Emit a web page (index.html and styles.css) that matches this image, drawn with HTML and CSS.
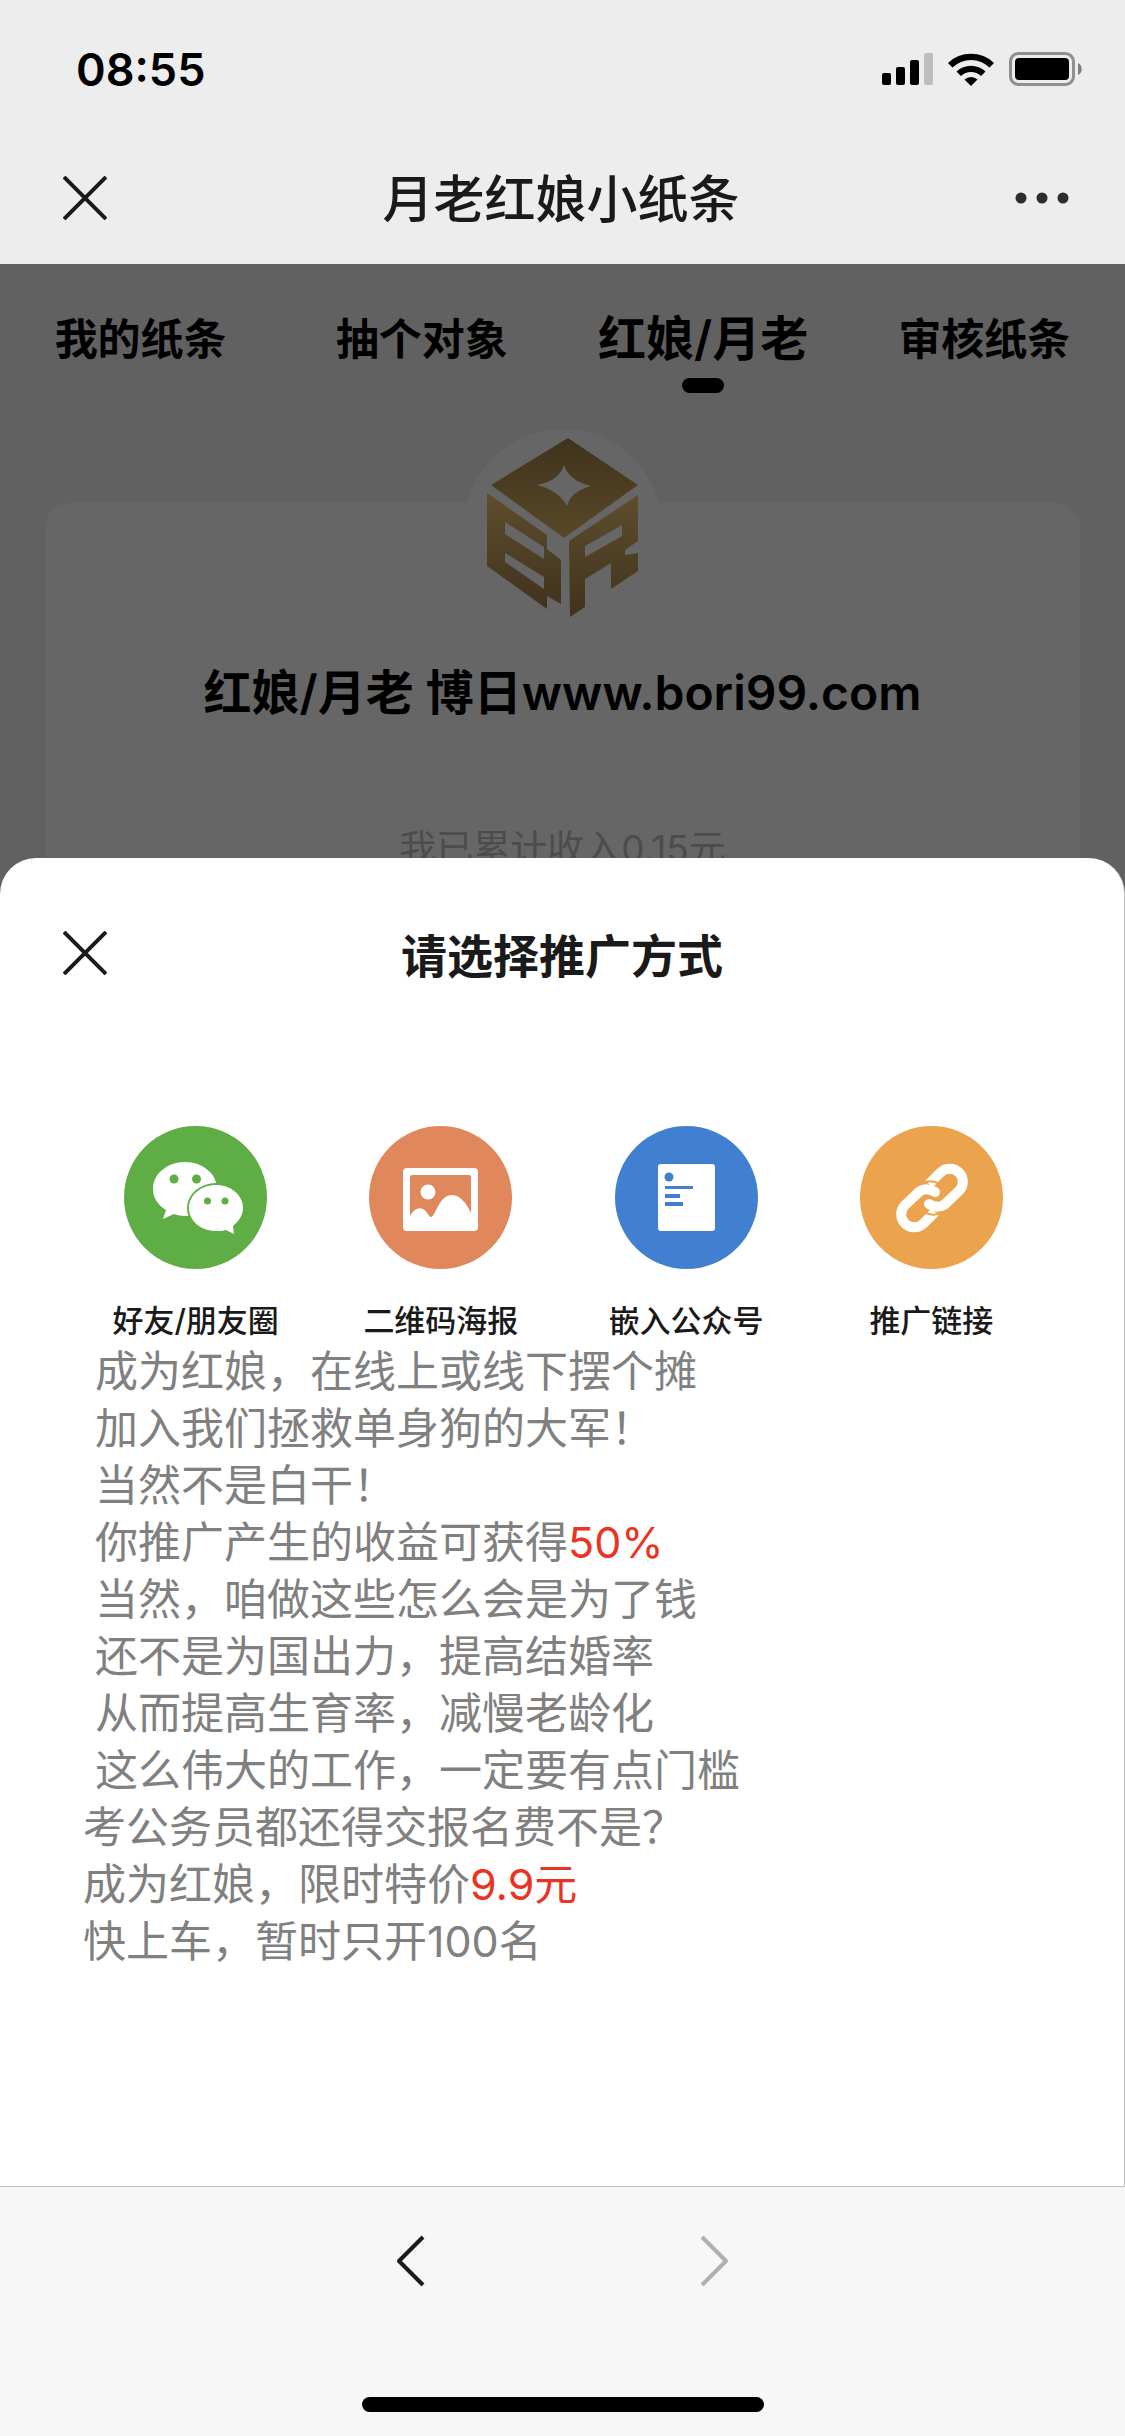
FILE: index.html
```html
<!DOCTYPE html>
<html lang="zh-CN">
<head>
  <meta charset="UTF-8">
  <meta name="viewport" content="width=device-width, initial-scale=1">
  <title>月老红娘小纸条</title>
  <link rel="stylesheet" href="styles.css">
</head>
<body>

<div class="app">
  <header class="header">
    <div class="status-bar">
      <span class="time">08:55</span>
      <div class="status-icons">
        <svg class="signal" viewBox="0 0 51 32">
          <rect x="0" y="20" width="9" height="12" rx="2"/>
          <rect x="14" y="14" width="9" height="18" rx="2"/>
          <rect x="28" y="7" width="9" height="25" rx="2"/>
          <rect x="42" y="0" width="9" height="32" rx="2" fill="#bdbdbd"/>
        </svg>
        <svg class="wifi" viewBox="0 0 46 33">
          <path d="M0 10a33 33 0 0 1 46 0l-4.500 4.500a26.500 26.500 0 0 0-37 0z"/>
          <path d="M8.500 18.500a21 21 0 0 1 29 0L33 23a14.500 14.500 0 0 0-20 0z"/>
          <path d="M16.500 26.500a9.500 9.500 0 0 1 13 0L23 33z"/>
        </svg>
        <svg class="battery" viewBox="0 0 74 34">
          <rect x="1.500" y="1.500" width="63" height="31" rx="8" fill="none" stroke="#909090" stroke-width="3"/>
          <rect x="6" y="6" width="54" height="22" rx="4"/>
          <path d="M69 11c5 2 5 10 0 12z" fill="#808080"/>
        </svg>
      </div>
    </div>
    <div class="nav-bar">
      <button class="icon-btn" type="button" aria-label="关闭">
        <svg class="close" viewBox="0 0 44 44"><path d="M1 1l42 42M43 1L1 43"/></svg>
      </button>
      <h1 class="nav-title">月老红娘小纸条</h1>
      <button class="icon-btn" type="button" aria-label="更多">
        <svg class="more" viewBox="0 0 54 12"><circle cx="6" cy="6" r="5.500"/><circle cx="27" cy="6" r="5.500"/><circle cx="48" cy="6" r="5.500"/></svg>
      </button>
    </div>
  </header>

  <main class="page">
    <nav class="tabs">
      <a class="tab" href="#notes">我的纸条</a>
      <a class="tab" href="#draw">抽个对象</a>
      <a class="tab active" href="#matchmaker">红娘/月老</a>
      <a class="tab" href="#review">审核纸条</a>
    </nav>

    <section class="card">
      <div class="avatar">
        <svg class="logo" viewBox="0 0 152 180">
          <defs>
            <linearGradient id="gold-top" x1="0" y1="0" x2="0" y2="1">
              <stop offset="0" stop-color="#40331c"/>
              <stop offset="1" stop-color="#594828"/>
            </linearGradient>
            <linearGradient id="gold-side" x1="0" y1="0" x2="0" y2="1">
              <stop offset="0" stop-color="#5e4e2e"/>
              <stop offset="1" stop-color="#40331c"/>
            </linearGradient>
          </defs>
          <path fill="url(#gold-top)" fill-rule="evenodd" d="M81 0L151 47 77 100 4 47zM77 27Q72 43 50 47 71 52 80 68 84 53 104 48 82 43 77 27z"/>
          <path fill="url(#gold-side)" fill-rule="evenodd" d="M0 55L60 97V111L74 122V166L60 158V171L0 128zM18 84V96L57 121V109zM18 115V124L57 151V139z"/>
          <path fill="url(#gold-side)" fill-rule="evenodd" d="M82 103L151 57V103L138 112V117L151 115V133L124 151V125L98 141V169L83 179zM98 108V119L135 98V87z"/>
        </svg>
      </div>
      <h2 class="name">红娘/月老 博日www.bori99.com</h2>
      <p class="income">我已累计收入0.15元</p>
    </section>
  </main>

  <section class="sheet">
    <div class="sheet-head">
      <button class="icon-btn" type="button" aria-label="关闭">
        <svg class="close" viewBox="0 0 44 44"><path d="M1 1l42 42M43 1L1 43"/></svg>
      </button>
      <h2 class="sheet-title">请选择推广方式</h2>
    </div>

    <div class="options">
      <button class="option" type="button">
        <svg class="option-icon" viewBox="0 0 143 143">
          <circle cx="71.500" cy="71.500" r="71.500" fill="#5fad45"/>
          <path fill="#fff" d="M61 36c18 0 32 12 32 27S79 90 61 90c-4 0-8-1-11-2l-11 5 3-9c-8-5-13-12-13-21 0-15 14-27 32-27z"/>
          <ellipse cx="92" cy="82" rx="29" ry="25" fill="#5fad45"/>
          <path fill="#fff" d="M92 59c15 0 27 10 27 23 0 7-4 13-10 18l1 8-8-4c-3 1-6 1-10 1-15 0-27-10-27-23s12-23 27-23z"/>
          <g fill="#5fad45"><circle cx="50" cy="53" r="4.500"/><circle cx="72.500" cy="53" r="4.500"/><circle cx="83.500" cy="75" r="3.500"/><circle cx="101" cy="75" r="3.500"/></g>
        </svg>
        <span>好友/朋友圈</span>
      </button>
      <button class="option" type="button">
        <svg class="option-icon" viewBox="0 0 143 143">
          <circle cx="71.500" cy="71.500" r="71.500" fill="#e1875c"/>
          <rect x="34" y="42" width="75" height="63" rx="4" fill="#fff"/>
          <path fill="#e1875c" d="M43 49h57q2 0 2 2v36c-4-9-11-18-19-18-10 0-14 12-18 19-2 4-4 4-6 0-4-7-12-9-18 2V51q0-2 2-2z"/>
          <circle cx="59" cy="66" r="7.500" fill="#fff"/>
        </svg>
        <span>二维码海报</span>
      </button>
      <button class="option" type="button">
        <svg class="option-icon" viewBox="0 0 143 143">
          <circle cx="71.500" cy="71.500" r="71.500" fill="#4180d1"/>
          <rect x="43" y="38" width="57" height="67" rx="3" fill="#fff"/>
          <g fill="#4180d1"><circle cx="54" cy="51" r="4.500"/><rect x="50" y="60" width="28" height="3"/><rect x="50" y="68" width="15" height="4"/><rect x="50" y="76" width="18" height="4"/></g>
        </svg>
        <span>嵌入公众号</span>
      </button>
      <button class="option" type="button">
        <svg class="option-icon" viewBox="0 0 143 143">
          <circle cx="71.500" cy="71.500" r="71.500" fill="#eba34e"/>
          <g fill="none" stroke="#fff" stroke-width="10">
            <path d="M69 58L80.500 46.500A13 13 0 0 1 99 65L84 79"/>
            <path d="M75 86L63.500 97.500A13 13 0 0 1 45 79L60 65"/>
            <path stroke-linecap="round" d="M84 79Q77 83 69 78M60 65Q67 61 75 66"/>
          </g>
          <path fill="none" stroke="#eba34e" stroke-width="2" d="M61 58Q71 52 81 59M83 86Q73 92 63 85"/>
        </svg>
        <span>推广链接</span>
      </button>
    </div>

    <p class="intro">&nbsp;成为红娘，在线上或线下摆个摊<br>
      &nbsp;加入我们拯救单身狗的大军！<br>
      &nbsp;当然不是白干！<br>
      &nbsp;你推广产生的收益可获得<span class="hot">50%</span><br>
      &nbsp;当然，咱做这些怎么会是为了钱<br>
      &nbsp;还不是为国出力，提高结婚率<br>
      &nbsp;从而提高生育率，减慢老龄化<br>
      &nbsp;这么伟大的工作，一定要有点门槛<br>
      考公务员都还得交报名费不是？<br>
      成为红娘，限时特价<span class="hot">9.9元</span><br>
      快上车，暂时只开100名</p>
  </section>

  <footer class="toolbar">
    <div class="history">
      <button class="icon-btn" type="button" aria-label="后退">
        <svg class="chevron" viewBox="0 0 28 52"><path d="M26 2L2 26l24 24"/></svg>
      </button>
      <button class="icon-btn" type="button" aria-label="前进" disabled>
        <svg class="chevron" viewBox="0 0 28 52"><path d="M2 2l24 24L2 50"/></svg>
      </button>
    </div>
    <div class="home-indicator"></div>
  </footer>
</div>

</body>
</html>
```
FILE: styles.css
```css
* {
  box-sizing: border-box;
}

body {
  margin: 0;
  font-family: Inter, "Noto Sans CJK SC", sans-serif;
  color: #1a1a1a;
  background: #616161;
}

h1, h2, p {
  margin: 0;
}

a {
  color: inherit;
  text-decoration: none;
}

button {
  padding: 0;
  border: 0;
  background: none;
  color: inherit;
  font: inherit;
  cursor: pointer;
}

svg {
  display: block;
}

.app {
  display: flex;
  flex-direction: column;
  min-height: 100vh;
}

/* header */
.header {
  background: #ededed;
}

.status-bar {
  display: flex;
  justify-content: space-between;
  align-items: center;
  height: 132px;
  padding: 6px 42px 0 76px;
}

.time {
  font-size: 45px;
  font-weight: 600;
  color: #000;
}

.status-icons {
  display: flex;
  align-items: center;
  gap: 15px;
}

.signal {
  width: 51px;
  height: 32px;
}

.wifi {
  width: 46px;
  height: 33px;
}

.battery {
  width: 74px;
  height: 34px;
}

.nav-bar {
  display: flex;
  justify-content: space-between;
  align-items: center;
  height: 132px;
  padding: 0 56px 0 63px;
}

.nav-title {
  margin-bottom: 5px;
  font-size: 51px;
  font-weight: 500;
}

.close {
  width: 44px;
  height: 44px;
  fill: none;
  stroke: #1a1a1a;
  stroke-width: 4;
}

.more {
  width: 54px;
  height: 12px;
  fill: #2d2d2d;
}

/* dimmed page */
.page {
  height: 594px;
  overflow: hidden;
  color: #000;
}

.tabs {
  display: flex;
  height: 132px;
  padding-top: 27px;
}

.tab {
  flex: 1;
  display: flex;
  flex-direction: column;
  align-items: center;
  font-size: 43px;
  font-weight: 600;
  line-height: 96px;
}

.tab.active {
  font-size: 48px;
}

.tab.active::after {
  content: "";
  width: 42px;
  height: 15px;
  margin-top: -9px;
  border-radius: 8px;
  background: #000;
}

.card {
  display: flex;
  flex-direction: column;
  align-items: center;
  height: 600px;
  margin: 107px 45px 0;
  border-radius: 24px;
  background: #666;
}

.avatar {
  display: flex;
  justify-content: center;
  align-items: center;
  width: 198px;
  height: 198px;
  margin-top: -74px;
  border-radius: 50%;
  background: #666;
}

.logo {
  width: 152px;
  height: 180px;
}

.name {
  margin-top: 30px;
  font-size: 48px;
  font-weight: 600;
  line-height: 72px;
}

.income {
  margin-top: 90px;
  font-size: 37px;
  line-height: 60px;
  color: #4c4c4c;
}

/* bottom sheet */
.sheet {
  flex: 1;
  padding-bottom: 120px;
  border-right: 1px solid #c0c0c0;
  border-radius: 36px 36px 0 0;
  background: #fff;
}

.sheet-head {
  display: grid;
  grid-template-columns: 44px 1fr 44px;
  align-items: center;
  height: 190px;
  padding: 0 63px;
}

.sheet-title {
  font-size: 46px;
  font-weight: 600;
  text-align: center;
}

.options {
  display: grid;
  grid-template-columns: repeat(4, 1fr);
  padding: 78px 70px 0 73px;
}

.option {
  display: flex;
  flex-direction: column;
  align-items: center;
  gap: 30px;
  font-size: 31px;
  font-weight: 500;
  line-height: 44px;
}

.option-icon {
  width: 143px;
  height: 143px;
}

.intro {
  padding-left: 83px;
  font-size: 43px;
  line-height: 57px;
  color: #808080;
}

.hot {
  color: #eb3323;
}

/* browser toolbar */
.toolbar {
  display: flex;
  flex-direction: column;
  justify-content: space-between;
  align-items: center;
  height: 250px;
  padding: 48px 0 24px;
  border-top: 1px solid #c0c0c0;
  background: #f7f7f7;
}

.history {
  display: flex;
  gap: 275px;
}

.chevron {
  width: 28px;
  height: 52px;
  fill: none;
  stroke: #1a1a1a;
  stroke-width: 4;
  stroke-linejoin: round;
}

.icon-btn:disabled .chevron {
  stroke: #b0b0b0;
}

.home-indicator {
  width: 402px;
  height: 15px;
  border-radius: 8px;
  background: #000;
}
```
